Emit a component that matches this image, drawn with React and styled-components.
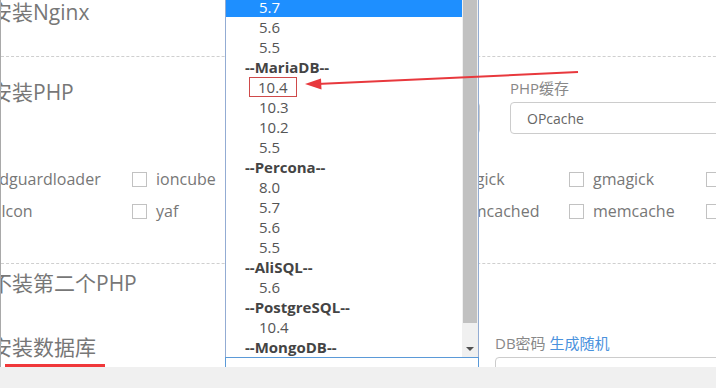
import React from "react";
import styled, { createGlobalStyle } from "styled-components";

const FONT = `"Open Sans", "Noto Sans CJK SC", sans-serif`;

const GlobalStyle = createGlobalStyle`
body {
    margin: 0;
    background: #fff;
    font-family: ${FONT};
    overflow: hidden;
}
`;

const checks = [
    ["zendguardloader", "ioncube", "sourceguardian", "imagick", "gmagick", "fileinfo"],
    ["phalcon", "yaf", "redis", "memcached", "memcache", "mongodb"],
];

const dbOptions = [
    { label: "5.7", selected: true },
    { label: "5.6" },
    { label: "5.5" },
    { label: "--MariaDB--", group: true },
    { label: "10.4", marked: true },
    { label: "10.3" },
    { label: "10.2" },
    { label: "5.5" },
    { label: "--Percona--", group: true },
    { label: "8.0" },
    { label: "5.7" },
    { label: "5.6" },
    { label: "5.5" },
    { label: "--AliSQL--", group: true },
    { label: "5.6" },
    { label: "--PostgreSQL--", group: true },
    { label: "10.4" },
    { label: "--MongoDB--", group: true },
];

const App = () => {
    return (
        <>
            <GlobalStyle />
            <Page>
                <Main>
                    <Content>
                        <Heading top={-2}>安装Nginx</Heading>
                        <Divider top={30} />

                        <Row top={21}>
                            <Heading>安装PHP</Heading>
                            <Field width={255}>
                                <Label>PHP版本</Label>
                                <SelectBox>PHP-7.3</SelectBox>
                            </Field>
                            <Field width={230} gapLeft={30}>
                                <Label>PHP缓存</Label>
                                <SelectBox>OPcache</SelectBox>
                            </Field>
                        </Row>

                        <CheckGrid>
                            {checks.flat().map((name) => (
                                <CheckItem key={name}>
                                    <Box />
                                    <span>{name}</span>
                                </CheckItem>
                            ))}
                        </CheckGrid>
                        <Divider top={36} />

                        <Heading top={5}>不装第二个PHP</Heading>

                        <Row top={36}>
                            <Heading>
                                安装数据库
                                <Underline />
                            </Heading>
                            <Field width={254}>
                                <Label>数据库版本</Label>
                                <SelectWrap>
                                    <Listbox>
                                        <Options>
                                            {dbOptions.map((o, i) => (
                                                <Option
                                                    key={i}
                                                    group={o.group}
                                                    selected={o.selected}
                                                >
                                                    {o.marked ? <Marked>{o.label}</Marked> : o.label}
                                                </Option>
                                            ))}
                                        </Options>
                                        <Scrollbar>
                                            <Thumb />
                                            <Track />
                                            <ArrowButton />
                                        </Scrollbar>
                                    </Listbox>
                                    <FocusedSelect />
                                </SelectWrap>
                            </Field>
                            <Field width={230} gapLeft={16}>
                                <Label>
                                    DB密码 <LinkText>生成随机</LinkText>
                                </Label>
                                <InputBox />
                            </Field>
                        </Row>
                    </Content>

                    <Annotation viewBox="0 0 716 367" width="716" height="367">
                        <line x1="577" y1="72" x2="316" y2="84" stroke="#e8383d" strokeWidth="2" />
                        <polygon points="304,84 320,78.5 320.5,89.5" fill="#e8383d" />
                    </Annotation>
                </Main>
                <BottomBar />
            </Page>
        </>
    );
};

const Page = styled.div`
width: 716px;
height: 388px;
display: flex;
flex-direction: column;
overflow: hidden;
`;

const Main = styled.div`
height: 367px;
position: relative;
overflow: hidden;
background: #fff;
border-left: 1px solid #a9a9a9;
`;

const Content = styled.div`
margin-left: -10px;
width: 760px;
`;

const Heading = styled.h2`
position: relative;
flex: 0 0 234px;
margin: ${({ top }) => top || 0}px 0 0 0;
font-size: 21px;
line-height: 28px;
font-weight: 400;
color: #777;
white-space: nowrap;
`;

const Underline = styled.span`
position: absolute;
left: 14px;
top: 31px;
width: 100px;
height: 5px;
background: #f0383a;
`;

const Divider = styled.div`
margin-top: ${({ top }) => top}px;
border-top: 1px dashed #cfcfcf;
`;

const Row = styled.div`
display: flex;
align-items: flex-start;
margin-top: ${({ top }) => top}px;
`;

const Field = styled.div`
flex: 0 0 ${({ width }) => width}px;
margin-left: ${({ gapLeft }) => gapLeft || 0}px;
display: flex;
flex-direction: column;
gap: 4px;
`;

const Label = styled.div`
font-size: 15px;
line-height: 20px;
color: #888;
white-space: nowrap;
`;

const LinkText = styled.span`
color: #4a92dd;
`;

const SelectBox = styled.div`
height: 32px;
box-sizing: border-box;
border: 1px solid #ccc;
border-radius: 4px;
padding-left: 16px;
display: flex;
align-items: center;
font-size: 14px;
color: #666;
`;

const InputBox = styled.div`
height: 32px;
box-sizing: border-box;
border: 1px solid #ccc;
border-radius: 4px;
`;

const CheckGrid = styled.div`
display: grid;
grid-template-columns: 183px 146px 146px 145px 137px 120px;
grid-auto-rows: 32px;
margin: 29px 0 0 -42px;
`;

const CheckItem = styled.label`
display: flex;
align-items: center;
gap: 9px;
font-size: 16px;
color: #777;
white-space: nowrap;
`;

const Box = styled.span`
width: 15px;
height: 15px;
box-sizing: border-box;
border: 1px solid #c2c2c2;
background: #fff;
flex-shrink: 0;
`;

const SelectWrap = styled.div`
position: relative;
`;

const FocusedSelect = styled.div`
height: 32px;
box-sizing: border-box;
border: 1px solid #5b9ad8;
background: #fff;
`;

const Listbox = styled.div`
position: absolute;
left: 0;
right: 0;
bottom: 100%;
display: flex;
background: #fff;
border: 1px solid #93acd3;
border-bottom: none;
z-index: 2;
`;

const Options = styled.ul`
flex: 1;
list-style: none;
margin: 0;
padding: 0;
`;

const Option = styled.li`
height: 20px;
line-height: 20px;
font-size: 15px;
padding-left: ${({ group }) => (group ? 19 : 33)}px;
font-weight: ${({ group }) => (group ? 700 : 400)};
color: ${({ group, selected }) => (selected ? "#fff" : group ? "#444" : "#555")};
background: ${({ selected }) => (selected ? "#1e8fff" : "transparent")};
`;

const Marked = styled.span`
display: inline-block;
margin-left: -10px;
padding: 0 8px;
height: 18px;
line-height: 18px;
border: 1px solid #cf4a4a;
`;

const Scrollbar = styled.div`
width: 16px;
display: flex;
flex-direction: column;
background: #f0f0f0;
`;

const Thumb = styled.div`
flex: 1;
margin: 0 1px;
background: #c1c1c1;
`;

const Track = styled.div`
height: 18px;
`;

const ArrowButton = styled.div`
height: 16px;
display: flex;
align-items: center;
justify-content: center;
&::after {
    content: "";
    border-left: 4px solid transparent;
    border-right: 4px solid transparent;
    border-top: 4px solid #505050;
}
`;

const Annotation = styled.svg`
position: absolute;
top: 0;
left: 0;
pointer-events: none;
z-index: 3;
`;

const BottomBar = styled.div`
flex: 1;
background: #f0f0f0;
`;

export default App;
